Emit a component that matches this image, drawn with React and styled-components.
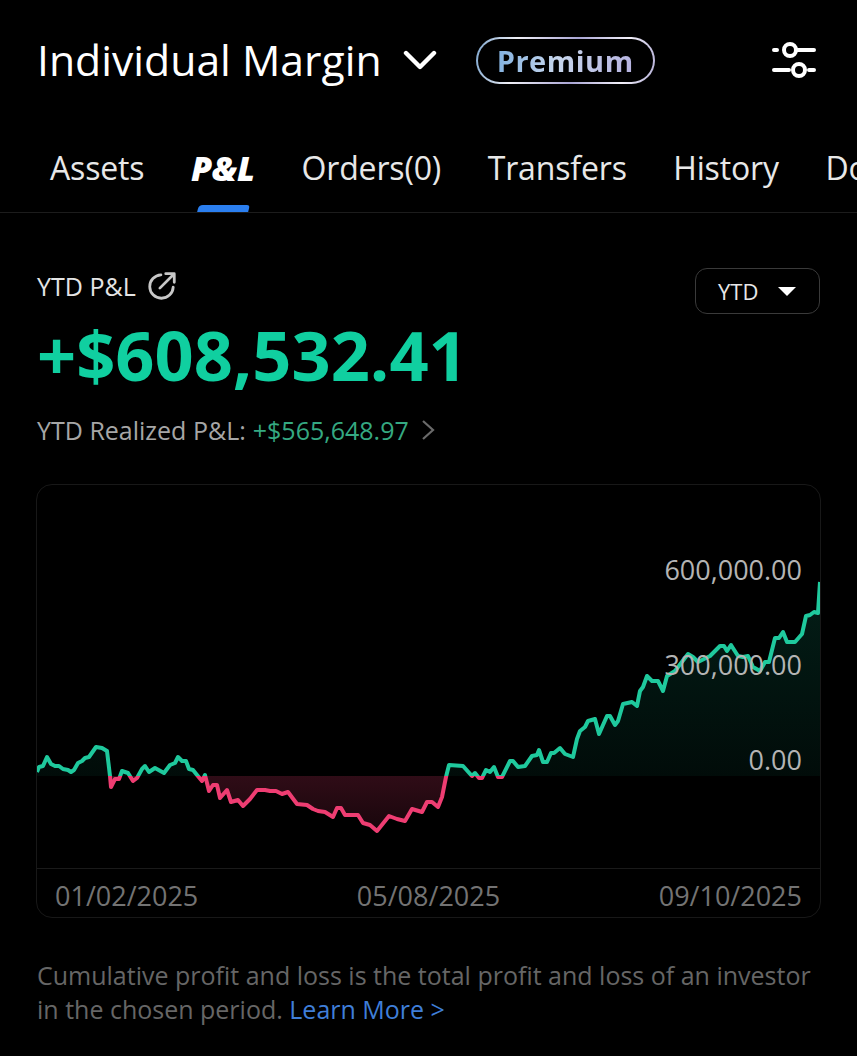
import React from "react";
import styled, { createGlobalStyle } from "styled-components";

const GlobalStyle = createGlobalStyle`
  html, body {
    margin: 0;
    padding: 0;
    background: #000;
    font-family: "Open Sans", "Liberation Sans", sans-serif;
  }
`;

const LINE = [
  [37,773],[39,768],[43,767],[47,758],[51,765],[55,767],[59,767],[63,770],[68,771],[71,773],[74,771],[78,764],[82,762],[85,759],[89,758],[96,748],[102,749],[107,752],[110,777],[111,788],[115,780],[119,780],[122,772],[128,774],[133,782],[137,779],[142,770],[145,767],[149,773],[155,769],[164,774],[170,766],[175,764],[178,758],[182,762],[186,762],[189,770],[193,771],[197,776],[202,782],[205,776],[209,792],[213,786],[217,786],[220,799],[227,791],[231,803],[238,801],[243,807],[250,800],[257,791],[265,791],[270,792],[276,792],[282,795],[288,793],[297,805],[307,806],[313,810],[318,812],[325,813],[333,818],[337,809],[341,809],[345,816],[358,816],[363,824],[370,826],[377,832],[389,817],[397,820],[405,822],[412,810],[422,813],[427,803],[432,803],[438,808],[442,798],[446,778],[449,766],[463,767],[472,777],[475,774],[479,779],[482,779],[486,771],[490,773],[494,768],[498,778],[502,778],[510,762],[513,762],[518,768],[525,767],[532,757],[537,756],[539,751],[543,763],[547,763],[551,754],[554,754],[560,749],[565,755],[573,758],[577,740],[580,732],[585,728],[588,722],[595,720],[599,735],[607,717],[610,717],[615,726],[618,722],[623,705],[632,703],[637,707],[640,692],[643,688],[647,677],[652,682],[658,682],[663,692],[667,677],[675,672],[688,655],[693,658],[698,663],[710,657],[720,647],[724,647],[727,652],[731,646],[738,657],[743,658],[748,657],[753,668],[760,672],[765,663],[769,663],[775,639],[779,639],[783,633],[787,643],[795,643],[802,635],[806,617],[810,616],[814,613],[818,614],[820,583],
];
const ZERO = 777;
const linePoints = LINE.map((p) => p.join(",")).join(" ");
const areaPoints = `37,${ZERO} ${linePoints} 820,${ZERO}`;

const TABS = ["Assets", "P&L", "Orders(0)", "Transfers", "History", "Documents"];

const Page = styled.div`
  width: 857px;
  height: 1056px;
  overflow: hidden;
  background: #000;
  color: #fff;
`;

const Header = styled.div`
  height: 120px;
  padding: 0 41px 0 37px;
  display: flex;
  align-items: center;
  box-sizing: border-box;
`;

const Title = styled.div`
  font-size: 42.7px;
  font-weight: 500;
  line-height: 54px;
  color: #fff;
  white-space: nowrap;
`;

const TitleCaret = styled.svg`
  width: 34px;
  height: 22px;
  margin-left: 21px;
`;

const PremiumBadge = styled.div`
  margin-left: 39px;
  height: 47px;
  width: 179px;
  box-sizing: border-box;
  border: 2px solid transparent;
  border-radius: 24px;
  background:
    linear-gradient(#000, #000) padding-box,
    linear-gradient(100deg, #7ea6cf 0%, #f0f0f6 22%, #a9a5d4 55%, #f3f1fa 82%, #b5b0d8 100%) border-box;
  display: flex;
  align-items: center;
  justify-content: center;
`;

const PremiumText = styled.span`
  font-size: 29px;
  font-weight: 700;
  letter-spacing: 0.5px;
  background: linear-gradient(100deg, #7fb0e0 0%, #c7d6ec 45%, #b6b2e0 100%);
  -webkit-background-clip: text;
  background-clip: text;
  color: transparent;
`;

const SlidersIcon = styled.svg`
  width: 44px;
  height: 36px;
  margin-left: auto;
`;

const TabBar = styled.div`
  height: 93px;
  padding-left: 50px;
  display: flex;
  gap: 46.5px;
  overflow: hidden;
  border-bottom: 1px solid #1c1c1c;
  box-sizing: border-box;
`;

const Tab = styled.div`
  position: relative;
  flex: none;
  padding-top: 27px;
  font-size: ${(p) => (p.$active ? 34 : 32)}px;
  line-height: 42px;
  letter-spacing: ${(p) => (p.$active ? 0 : -0.15)}px;
  color: ${(p) => (p.$active ? "#fff" : "#e8e8e8")};
  font-weight: ${(p) => (p.$active ? 800 : 400)};
  font-style: ${(p) => (p.$active ? "italic" : "normal")};
`;

const TabMark = styled.div`
  position: absolute;
  left: 7px;
  right: 6px;
  bottom: 0;
  height: 7px;
  background: #2b7ff0;
  border-radius: 4px 3px 0 0;
  transform: skewX(-14deg);
`;

const Summary = styled.div`
  padding: 55px 37px 0;
`;

const SummaryTop = styled.div`
  display: flex;
  align-items: flex-start;
  justify-content: space-between;
`;

const LabelRow = styled.div`
  display: flex;
  align-items: center;
  gap: 10px;
  font-size: 25px;
  line-height: 36px;
  color: #e4e4e4;
`;

const ShareIcon = styled.svg`
  width: 32px;
  height: 32px;
`;

const RangeButton = styled.div`
  width: 125px;
  height: 46px;
  box-sizing: border-box;
  border: 1px solid #3a3a3a;
  border-radius: 12px;
  display: flex;
  align-items: center;
  gap: 20px;
  padding-left: 22px;
  font-size: 22px;
  color: #e8e8e8;
`;

const RangeCaret = styled.div`
  width: 0;
  height: 0;
  border-left: 9px solid transparent;
  border-right: 9px solid transparent;
  border-top: 9px solid #fff;
`;

const BigValue = styled.div`
  margin-top: -5px;
  font-size: 68.5px;
  line-height: 92px;
  font-weight: 700;
  color: #10cfa0;
`;

const RealizedRow = styled.div`
  margin-top: 12px;
  display: flex;
  align-items: center;
  font-size: 25px;
  line-height: 34px;
  color: #a6a6a6;
`;

const RealizedValue = styled.span`
  margin-left: 7px;
  color: #35a982;
`;

const RowArrow = styled.svg`
  width: 16px;
  height: 24px;
  margin-left: 11px;
`;

const ChartCard = styled.div`
  position: relative;
  margin: 37px 36px 0 36px;
  height: 434px;
  box-sizing: border-box;
  border: 1px solid #181818;
  border-radius: 16px;
  overflow: hidden;
`;

const ChartSvg = styled.svg`
  display: block;
  width: 783px;
  height: 383px;
`;

const AxisLabel = styled.div`
  position: absolute;
  right: 18px;
  top: ${(p) => p.$top}px;
  font-size: 27px;
  line-height: 36px;
  color: #b4b4b4;
`;

const DateRow = styled.div`
  height: 49px;
  padding: 5px 18px 0;
  box-sizing: border-box;
  border-top: 1px solid #1a1a1a;
  display: flex;
  align-items: center;
  justify-content: space-between;
  font-size: 27px;
  color: #737373;
`;

const Note = styled.div`
  margin: 40px 36px 0 37px;
  font-size: 25px;
  line-height: 34px;
  color: #666;
`;

const NoteLink = styled.span`
  color: #3f7ed8;
`;

export default function App() {
  return (
    <Page>
      <GlobalStyle />
      <Header>
        <Title>Individual Margin</Title>
        <TitleCaret viewBox="0 0 34 22" fill="none" stroke="#fff" strokeWidth="4.4" strokeLinecap="round" strokeLinejoin="round">
          <path d="M3 4 L17 18 L31 4" />
        </TitleCaret>
        <PremiumBadge>
          <PremiumText>Premium</PremiumText>
        </PremiumBadge>
        <SlidersIcon viewBox="0 0 44 36" fill="none" stroke="#fff" strokeWidth="4" strokeLinecap="round">
          <path d="M2 8 H5 M25 8 H42 M2 28 H17 M37 28 H42" />
          <circle cx="18" cy="8" r="6" />
          <circle cx="27" cy="28" r="6" />
        </SlidersIcon>
      </Header>

      <TabBar>
        {TABS.map((t) => (
          <Tab key={t} $active={t === "P&L"}>
            {t}
            {t === "P&L" && <TabMark />}
          </Tab>
        ))}
      </TabBar>

      <Summary>
        <SummaryTop>
          <LabelRow>
            YTD P&amp;L
            <ShareIcon viewBox="0 0 30 30" fill="none" stroke="#c8c8c8" strokeWidth="2.6" strokeLinecap="round" strokeLinejoin="round">
              <path d="M14 4.5 A11 11 0 1 0 25.5 16" />
              <path d="M13 17 L26 4 M18.5 3.5 H26.5 V11.5" />
            </ShareIcon>
          </LabelRow>
          <RangeButton>
            YTD
            <RangeCaret />
          </RangeButton>
        </SummaryTop>
        <BigValue>+$608,532.41</BigValue>
        <RealizedRow>
          YTD Realized P&amp;L:
          <RealizedValue>+$565,648.97</RealizedValue>
          <RowArrow viewBox="0 0 16 24" fill="none" stroke="#6a6a6a" strokeWidth="2.2">
            <path d="M3 3 L13 12 L3 21" />
          </RowArrow>
        </RealizedRow>
      </Summary>

      <ChartCard>
        <ChartSvg viewBox="37 486 783 383">
          <defs>
            <linearGradient id="gainFill" gradientUnits="userSpaceOnUse" x1="0" y1="583" x2="0" y2={ZERO}>
              <stop offset="0" stopColor="#14c79a" stopOpacity="0.15" />
              <stop offset="1" stopColor="#14c79a" stopOpacity="0.06" />
            </linearGradient>
            <linearGradient id="lossFill" gradientUnits="userSpaceOnUse" x1="0" y1={ZERO} x2="0" y2="832">
              <stop offset="0" stopColor="#ee3d72" stopOpacity="0.2" />
              <stop offset="1" stopColor="#ee3d72" stopOpacity="0.1" />
            </linearGradient>
            <clipPath id="aboveZero">
              <rect x="37" y="486" width="783" height={ZERO - 486} />
            </clipPath>
            <clipPath id="belowZero">
              <rect x="37" y={ZERO} width="783" height="120" />
            </clipPath>
          </defs>
          <polygon points={areaPoints} fill="url(#gainFill)" clipPath="url(#aboveZero)" />
          <polygon points={areaPoints} fill="url(#lossFill)" clipPath="url(#belowZero)" />
          <polyline points={linePoints} fill="none" stroke="#1fc99d" strokeWidth="4" strokeLinejoin="round" clipPath="url(#aboveZero)" />
          <polyline points={linePoints} fill="none" stroke="#ee3d72" strokeWidth="4" strokeLinejoin="round" clipPath="url(#belowZero)" />
        </ChartSvg>
        <AxisLabel $top={67}>600,000.00</AxisLabel>
        <AxisLabel $top={162}>300,000.00</AxisLabel>
        <AxisLabel $top={257}>0.00</AxisLabel>
        <DateRow>
          <span>01/02/2025</span>
          <span>05/08/2025</span>
          <span>09/10/2025</span>
        </DateRow>
      </ChartCard>

      <Note>
        Cumulative profit and loss is the total profit and loss of an investor in the chosen period. <NoteLink>Learn More &gt;</NoteLink>
      </Note>
    </Page>
  );
}
